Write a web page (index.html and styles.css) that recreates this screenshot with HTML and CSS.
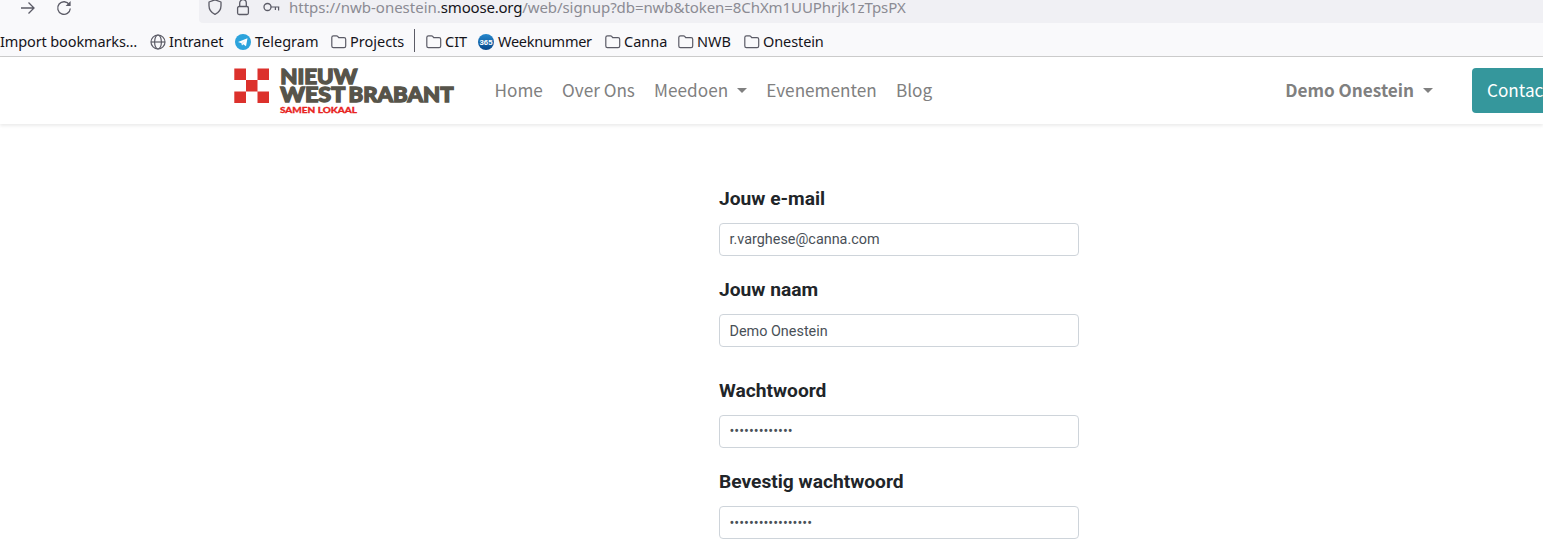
FILE: index.html
```html
<!DOCTYPE html>
<html lang="nl">
<head>
<meta charset="utf-8">
<title>Nieuw West Brabant</title>
<link rel="stylesheet" href="styles.css">
</head>
<body>
<svg class="defs" width="0" height="0">
  <symbol id="folder" viewBox="0 0 16 14"><path d="M.8 11V2.500C.8 1.400 1.400.8 2.500.8h3c.5 0 .9.2 1.200.6l1 1.300h5.400c1 0 1.600.6 1.600 1.600V11c0 1-.6 1.700-1.600 1.700H2.400C1.400 12.700.8 12 .8 11z" fill="none" stroke="#5b5b66" stroke-width="1.200"/></symbol>
</svg>
<div class="toolbar">
  <div class="controls">
    <svg class="forward" width="16" height="16" viewBox="0 0 16 16"><path d="M1 8h13M8.500 2.500 14 8l-5.500 5.500" fill="none" stroke="#5b5b66" stroke-width="1.300"/></svg>
    <svg class="reload" width="16" height="16" viewBox="0 0 16 16"><path d="M13.300 4.600A6.300 6.300 0 1 0 14.300 8.500" fill="none" stroke="#5b5b66" stroke-width="1.300"/><path d="M14.600 1v5h-5z" fill="#5b5b66"/></svg>
  </div>
  <div class="urlbar">
    <svg class="shield" width="16" height="17" viewBox="0 0 16 17"><path d="M8 .8 14 3v3.800c0 3.700-2.500 7-6 8.600-3.500-1.600-6-4.900-6-8.600V3z" fill="none" stroke="#5b5b66" stroke-width="1.300" stroke-linejoin="round"/></svg>
    <svg class="lock" width="14" height="17" viewBox="0 0 14 17"><rect x="1.600" y="7.500" width="10.800" height="8" rx="1.500" fill="none" stroke="#5b5b66" stroke-width="1.300"/><path d="M3.700 7.500V4a3.300 3.300 0 0 1 6.600 0v3.500" fill="none" stroke="#5b5b66" stroke-width="1.300"/></svg>
    <svg class="key" width="17" height="10" viewBox="0 0 17 10"><circle cx="4.500" cy="5" r="3.500" fill="none" stroke="#5b5b66" stroke-width="1.300"/><path d="M8 5h8.300M12.400 5v3M15.600 5v3.500" fill="none" stroke="#5b5b66" stroke-width="1.200"/></svg>
    <span class="url"><span>https://nwb-onestein.</span><span class="host">smoose.org</span><span class="path">/web/signup?db=nwb&amp;token=8ChXm1UUPhrjk1zTpsPX</span></span>
  </div>
</div>
<div class="bookmarks">
  <span class="mark import">Import bookmarks…</span>
  <span class="mark"><svg width="16" height="16" viewBox="0 0 16 16"><g fill="none" stroke="#5b5b66" stroke-width="1.200"><circle cx="8" cy="8" r="7"/><ellipse cx="8" cy="8" rx="3.400" ry="7"/><path d="M1 8h14"/></g></svg><span class="intranet">Intranet</span></span>
  <span class="mark"><svg width="16" height="16" viewBox="0 0 16 16"><circle cx="8" cy="8" r="8" fill="#2ca3dc"/><path d="M3 7.900 12.500 4.200 11 12.300 8.300 10.300 7 11.500 6.500 9.200z" fill="#fff"/><path d="M6.500 9.200 10.800 5.900 7.300 9.600 7 11.500z" fill="#b9dcef"/></svg><span>Telegram</span></span>
  <span class="mark"><svg class="dir" width="16" height="14"><use href="#folder"/></svg><span>Projects</span></span>
  <span class="divider"></span>
  <span class="mark"><svg class="dir" width="16" height="14"><use href="#folder"/></svg><span>CIT</span></span>
  <span class="mark"><svg width="16" height="16" viewBox="0 0 16 16"><defs><linearGradient id="blue" x2="0" y2="1"><stop stop-color="#2688cd"/><stop offset="1" stop-color="#07478a"/></linearGradient></defs><circle cx="8" cy="8" r="8" fill="url(#blue)"/><text class="days" x="1.500" y="10.600" textLength="13" lengthAdjust="spacingAndGlyphs">365</text></svg><span class="week">Weeknummer</span></span>
  <span class="mark"><svg class="dir" width="16" height="14"><use href="#folder"/></svg><span>Canna</span></span>
  <span class="mark"><svg class="dir" width="16" height="14"><use href="#folder"/></svg><span>NWB</span></span>
  <span class="mark"><svg class="dir" width="16" height="14"><use href="#folder"/></svg><span class="onestein">Onestein</span></span>
</div>
<header class="site">
  <svg class="logo" width="222" height="50" viewBox="0 0 222 50">
    <path fill="#dc312c" d="M.3.600h11.700v11.400h11.500V.6H35v11.400H23.500v11.500H35V35H23.500V23.500H12V35H.3V23.500H12V12H.3z"/>
    <g class="brand"><text x="46.300" y="16.100" textLength="77" lengthAdjust="spacingAndGlyphs">NIEUW</text>
    <text x="46.300" y="34.200" textLength="65" lengthAdjust="spacingAndGlyphs">WEST</text>
    <text x="114.500" y="34.200" textLength="105" lengthAdjust="spacingAndGlyphs">BRABANT</text></g>
    <text class="tagline" x="46" y="44.800" textLength="77" lengthAdjust="spacingAndGlyphs">SAMEN LOKAAL</text>
  </svg>
  <nav class="menu">
    <a>Home</a><a>Over Ons</a><a class="more">Meedoen</a><a>Evenementen</a><a>Blog</a>
  </nav>
  <a class="account more">Demo Onestein</a>
  <a class="contact">Contact</a>
</header>
<main class="form">
  <div class="field"><label>Jouw e-mail</label><div class="input">r.varghese@canna.com</div></div>
  <div class="field name"><label>Jouw naam</label><div class="input">Demo Onestein</div></div>
  <div class="field"><label>Wachtwoord</label><div class="input secret">•••••••••••••</div></div>
  <div class="field"><label>Bevestig wachtwoord</label><div class="input secret">•••••••••••••••••</div></div>
</main>
</body>
</html>
```
FILE: styles.css
```css
* { box-sizing: border-box; }
body { margin: 0; height: 551px; overflow: hidden; background: #fff; }
svg { display: block; flex: none; }
.defs { display: none; }
.toolbar { display: flex; height: 23px; background: #f9f9fb; font: 15px/15px "Noto Sans", sans-serif; }
.controls { display: flex; gap: 20px; width: 199px; padding-left: 20px; }
.urlbar { display: flex; flex: 1; padding-left: 8px; background: #f0f0f4; border-bottom-left-radius: 4px; color: #8b8b93; white-space: nowrap; }
.shield { margin-top: -1px; }
.lock { margin: -1px 0 0 13px; }
.key { margin: 2px 0 0 13px; }
.url { margin-left: 9px; }
.host { color: #15141a; letter-spacing: -.2px; }
.path { letter-spacing: -.07px; }
.bookmarks { display: grid; grid-template-columns: 150px 85px 96px 83px 12px 52px 127px 73px 66px auto; align-items: center; height: 34px; padding-top: 3px; background: #f9f9fb; border-bottom: 1px solid #ccc; font: 14.500px/20px "Noto Sans", sans-serif; color: #15141a; white-space: nowrap; }
.mark { display: flex; align-items: center; gap: 4px; }
.mark svg { position: relative; top: .5px; }
.import { letter-spacing: -.12px; }
.intranet { margin-left: -1px; letter-spacing: -.12px; }
.week { letter-spacing: -.27px; }
.onestein { letter-spacing: -.1px; }
.dir { margin-right: -1px; }
.divider { width: 1px; height: 23px; margin-top: -2px; background: #5b5b66; }
.days { font: bold 6.500px "Liberation Sans", sans-serif; fill: #fff; }
.site { display: flex; align-items: center; height: 67px; padding-left: 234px; font: 17.180px/28px "Noto Sans CJK SC", sans-serif; color: #808080; box-shadow: 0 2px 3px rgba(0,0,0,.08); white-space: nowrap; }
.logo { margin-top: 5px; overflow: visible; }
.brand { font: 900 20.500px Lato, sans-serif; fill: #57544a; stroke: #57544a; stroke-width: 1.300; }
.tagline { font: 900 8.300px Lato, sans-serif; fill: #e8251f; stroke: #e8251f; stroke-width: .3; }
.menu { display: flex; gap: 19.200px; margin-left: 38.500px; }
.menu, .account { margin-top: -1px; }
.more::after { content: ""; display: inline-block; margin-left: 9px; vertical-align: 4px; border: 5px solid transparent; border-top-color: currentColor; border-bottom: 0; }
.account { margin-left: auto; font-weight: bold; }
.contact { flex: none; width: 100px; height: 45px; margin: 0 -29px 0 39px; padding: 8px 15px; border-radius: 4px; background: #35979c; color: #fff; }
.form { width: 360px; margin: 62px 0 0 719px; font-family: Roboto, sans-serif; }
.field { height: 91px; }
.name { height: 101px; }
label { display: block; height: 37px; font-size: 19.200px; line-height: 25px; font-weight: bold; color: #212529; }
.input { height: 33px; padding: 0 9.500px; border: 1px solid #ced4da; border-radius: 4px; font-size: 14.400px; line-height: 31px; color: #495057; }
.name .input { line-height: 33px; }
.secret { line-height: 32px; }
.field:last-child .secret { line-height: 34px; }
```
